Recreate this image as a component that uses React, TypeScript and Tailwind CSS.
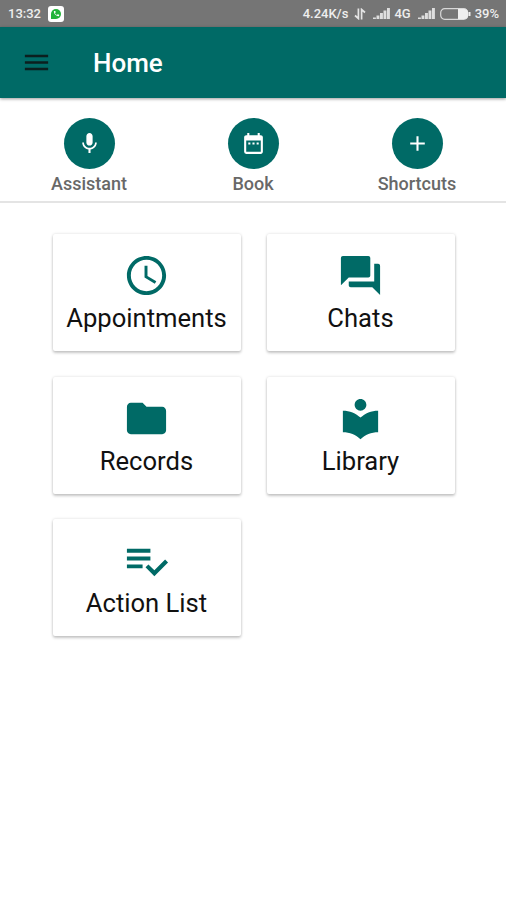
import type { ComponentType } from "react";
import {
	MdAccessTime,
	MdAdd,
	MdDateRange,
	MdFolder,
	MdForum,
	MdLocalLibrary,
	MdMenu,
	MdMic,
	MdPhone,
} from "react-icons/md";

type Item = { label: string; icon: ComponentType<{ className?: string }> };

function ListCheck({ className }: { className?: string }) {
	return (
		<svg className={className} viewBox="0 0 24 24" fill="currentColor">
			<path d="M14 10H2v2h12v-2zm0-4H2v2h12V6zM2 16h8v-2H2v2zm19.5-4.5L23 13l-6.99 7-4.51-4.5L13 14l3.01 3 5.49-5.5z" />
		</svg>
	);
}

const shortcuts: Item[] = [
	{ label: "Assistant", icon: MdMic },
	{ label: "Book", icon: MdDateRange },
	{ label: "Shortcuts", icon: MdAdd },
];

const tiles: Item[] = [
	{ label: "Appointments", icon: MdAccessTime },
	{ label: "Chats", icon: MdForum },
	{ label: "Records", icon: MdFolder },
	{ label: "Library", icon: MdLocalLibrary },
	{ label: "Action List", icon: ListCheck },
];

function Signal() {
	return (
		<svg className="h-[11px] w-[17px]" viewBox="0 0 17 11" fill="#dedede">
			<path d="M0 9.5h2.9V11H0zM3.5 7.5h2.9V11H3.5zM7 5h2.9v6H7zM10.5 2.5h2.9V11h-2.9zM14 0h2.9v11H14z" />
		</svg>
	);
}

function StatusBar() {
	return (
		<div className="flex h-[26.5px] items-center bg-[#757575] pt-px pr-[7px] pl-2 text-[13px] font-medium text-[#eeeeee]">
			<span className="w-[34px] whitespace-nowrap">13:32</span>
			<span className="ml-[6px] flex h-[16px] w-[16px] items-center justify-center rounded-[3px] bg-white">
				<span className="flex h-[10px] w-[10px] items-center justify-center rounded-full rounded-bl-[2px] bg-[#23b33a]">
					<MdPhone className="h-[7px] w-[7px] text-white" />
				</span>
			</span>
			<span className="ml-auto">4.24K/s</span>
			<svg className="ml-[6px] h-[12px] w-[12px]" viewBox="0 0 12 12" fill="none" stroke="#e4e4e4" strokeWidth="1.7">
				<path d="M4.4.5v10L1 7.5M7.6 11.5v-10l3.4 3" />
			</svg>
			<span className="ml-[7px]">
				<Signal />
			</span>
			<span className="ml-[4px]">4G</span>
			<span className="ml-[7px]">
				<Signal />
			</span>
			<svg className="ml-[5px] h-[12px] w-[31px]" viewBox="0 0 31 12">
				<rect x=".7" y=".7" width="27" height="10.6" rx="4" fill="none" stroke="#d8d8d8" strokeWidth="1.2" />
				<path d="M18 1h6.5a3.5 3.5 0 0 1 3.5 3.5v3a3.5 3.5 0 0 1-3.5 3.5H18zM28.5 4h2v4h-2z" fill="#eeeeee" />
			</svg>
			<span className="ml-[4px]">39%</span>
		</div>
	);
}

function Shortcut({ label, icon: Icon }: Item) {
	return (
		<div className="flex flex-col items-center">
			<div className="flex h-[51px] w-[51px] items-center justify-center rounded-full bg-[#006a66]">
				<Icon className="h-[25px] w-[25px] text-white" />
			</div>
			<span className="mt-[4px] text-[18px] leading-[21px] font-medium text-[#686868]">{label}</span>
		</div>
	);
}

function Tile({ label, icon: Icon }: Item) {
	return (
		<div className="flex h-[117px] flex-col items-center rounded-[2px] bg-white pt-[18px] shadow-[0_2px_3px_rgba(0,0,0,0.2),0_0_3px_rgba(0,0,0,0.14)]">
			<Icon className="mr-[1px] h-[47px] w-[47px] text-[#006a66]" />
			<span className="mt-[3px] text-[25.6px] leading-[32px] text-[#111111]">{label}</span>
		</div>
	);
}

export default function App() {
	return (
		<div className="min-h-screen bg-white font-[Roboto,sans-serif]">
			<StatusBar />
			<header className="relative flex h-[71.5px] items-center bg-[#006a66] pl-[21px] shadow-[0_1px_3px_rgba(0,0,0,0.4)]">
				<MdMenu className="h-[31px] w-[31px] text-[#0b1f1f]" />
				<h1 className="mt-[3px] ml-[41px] text-[26px] font-medium text-white">Home</h1>
			</header>
			<nav className="grid h-[105px] grid-cols-3 border-b-2 border-[#e4e4e4] px-[7px] pt-[20px]">
				{shortcuts.map((item) => (
					<Shortcut key={item.label} {...item} />
				))}
			</nav>
			<main className="grid grid-cols-[188px_188px] gap-x-[26px] gap-y-[25.6px] pt-[31px] pl-[52.5px]">
				{tiles.map((item) => (
					<Tile key={item.label} {...item} />
				))}
			</main>
		</div>
	);
}
